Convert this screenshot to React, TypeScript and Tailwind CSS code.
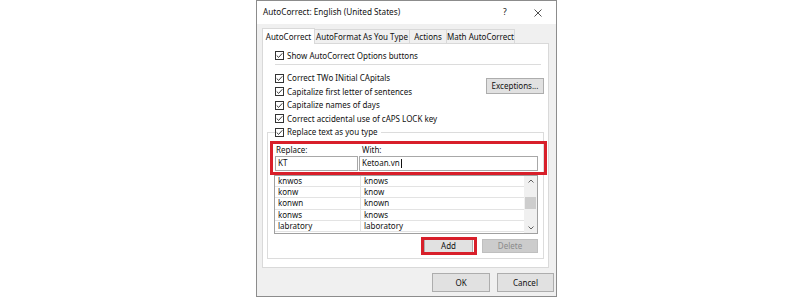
import React from "react";

function CheckBox() {
  return (
    <span className="w-[9px] h-[9px] border border-[#333333] bg-white flex items-center justify-center shrink-0">
      <svg width="7" height="7" viewBox="0 0 7 7">
        <path d="M0.7 3.5 L2.6 5.4 L6.3 1.3" fill="none" stroke="#222222" strokeWidth="0.9" />
      </svg>
    </span>
  );
}

function Check({ label }: { label: string }) {
  return (
    <div className="flex items-center h-[13.5px]">
      <CheckBox />
      <span className="ml-[3px] whitespace-nowrap">{label}</span>
    </div>
  );
}

const rows: [string, string][] = [
  ["knwos", "knows"],
  ["konw", "know"],
  ["konwn", "known"],
  ["konws", "knows"],
  ["labratory", "laboratory"],
];

function Chevron({ up }: { up?: boolean }) {
  return (
    <svg width="6" height="4" viewBox="0 0 6 4">
      <path
        d={up ? "M0.5 3.5 L3 1 L5.5 3.5" : "M0.5 0.5 L3 3 L5.5 0.5"}
        fill="none"
        stroke="#606060"
        strokeWidth="1"
      />
    </svg>
  );
}

export default function App() {
  return (
    <div className="w-[800px] h-[299px] bg-white relative overflow-hidden font-['Noto_Sans',sans-serif] text-[8px] text-[#111111] leading-none">
      <div className="ml-[256px] w-[301px] h-[297px] border border-[#8c8c8c] bg-[#f0f0f0] flex flex-col">
        {/* Title bar */}
        <div className="h-[23px] bg-white flex items-center relative">
          <span className="ml-[6px] text-[8.2px] whitespace-nowrap">AutoCorrect: English (United States)</span>
          <span className="absolute left-[246px] top-[7px] text-[8.5px]">?</span>
          <svg className="absolute left-[277px] top-[8px]" width="8" height="8" viewBox="0 0 8 8">
            <path d="M0.5 0.5 L7.5 7.5 M7.5 0.5 L0.5 7.5" stroke="#222222" strokeWidth="0.8" />
          </svg>
        </div>
        {/* Tabs */}
        <div className="flex items-end h-[16px] mt-[4px] ml-[5px] -mb-px relative z-10 whitespace-nowrap">
          <div className="h-[16px] w-[53px] bg-white border border-b-0 border-[#d9d9d9] flex items-center justify-center">
            AutoCorrect
          </div>
          <div className="h-[14px] mb-px w-[95px] border border-b-0 border-l-0 border-[#d9d9d9] flex items-center justify-center">
            AutoFormat As You Type
          </div>
          <div className="h-[14px] mb-px w-[37px] border border-b-0 border-l-0 border-[#d9d9d9] flex items-center justify-center">
            Actions
          </div>
          <div className="h-[14px] mb-px w-[68px] border border-b-0 border-l-0 border-[#d9d9d9] flex items-center justify-center">
            Math AutoCorrect
          </div>
        </div>
        {/* Panel */}
        <div className="ml-[5px] w-[287px] h-[225px] border border-[#d9d9d9] bg-white pt-[5px] pl-[4px]">
          <div className="pl-[8px]">
            <Check label="Show AutoCorrect Options buttons" />
          </div>
          <div className="ml-[8px] w-[266px] h-px bg-[#dcdcdc] mt-[1.5px]" />
          <div className="flex w-[277px] mt-[6.5px]">
            <div className="pl-[8px] flex-1">
              <Check label="Correct TWo INitial CApitals" />
              <Check label="Capitalize first letter of sentences" />
              <Check label="Capitalize names of days" />
              <Check label="Correct accidental use of cAPS LOCK key" />
            </div>
            <div className="mt-[6px] w-[58px] h-[16px] bg-[#e1e1e1] border border-[#adadad] flex items-center justify-center">
              Exceptions...
            </div>
          </div>
          <fieldset className="w-[277px] border border-[#dcdcdc] pl-[7px] pr-[5px] pb-[5px]">
            <legend className="pr-[3px]">
              <Check label="Replace text as you type" />
            </legend>
            <div className="flex h-[12px] mt-[4.5px] items-center">
              <span className="w-[84px] pl-px">Replace:</span>
              <span className="pl-[3px]">With:</span>
            </div>
            <div className="flex gap-px">
              <div className="w-[83px] h-[15px] border border-[#a8a8a8] flex items-center pl-[2px]">KT</div>
              <div className="w-[179px] h-[15px] border border-[#a8a8a8] flex items-center pl-[2px]">
                Ketoan.vn<span className="w-px h-[9px] bg-[#111111] ml-px" />
              </div>
            </div>
            <div className="-ml-px w-[264px] h-[59px] border border-[#a0a0a0] mt-[4px] flex">
              <div className="flex-1">
                {rows.map(([a, b]) => (
                  <div key={a} className="flex h-[11.4px] border-b border-[#e3e3e3] items-center">
                    <div className="w-[86px] h-full border-r border-[#e3e3e3] pl-[3px] flex items-center">{a}</div>
                    <div className="pl-[3px]">{b}</div>
                  </div>
                ))}
              </div>
              <div className="w-[13px] h-full bg-[#f0f0f0] flex flex-col items-center">
                <div className="h-[10px] flex items-center justify-center">
                  <Chevron up />
                </div>
                <div className="w-[11px] h-[12px] bg-[#cdcdcd] mt-[11px]" />
                <div className="flex-1" />
                <div className="h-[10px] flex items-center justify-center">
                  <Chevron />
                </div>
              </div>
            </div>
            <div className="flex justify-end gap-[9px] mt-[5px]">
              <div className="w-[49px] h-[14px] bg-[#e1e1e1] border border-[#adadad] flex items-center justify-center">
                Add
              </div>
              <div className="w-[56px] h-[14px] bg-[#cccccc] border border-[#bfbfbf] text-[#8a8a8a] flex items-center justify-center">
                Delete
              </div>
            </div>
          </fieldset>
        </div>
        {/* Footer */}
        <div className="flex justify-end gap-[7px] mt-[5px] pr-[2px]">
          <div className="w-[58px] h-[19px] bg-[#e1e1e1] border border-[#adadad] flex items-center justify-center">
            OK
          </div>
          <div className="w-[57px] h-[19px] bg-[#e1e1e1] border border-[#adadad] flex items-center justify-center">
            Cancel
          </div>
        </div>
      </div>
      {/* Red annotation boxes */}
      <div className="absolute left-[270px] top-[141px] w-[277px] h-[34px] border-[3px] border-[#d81f2a]" />
      <div className="absolute left-[421px] top-[237px] w-[56px] h-[18px] border-[3px] border-[#d81f2a]" />
    </div>
  );
}
